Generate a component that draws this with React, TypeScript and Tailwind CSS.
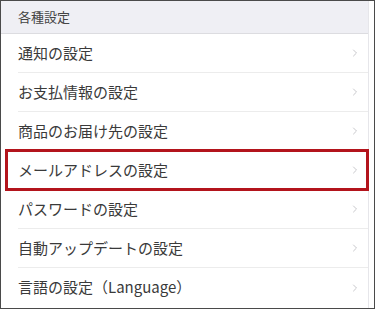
import { ChevronRight } from "lucide-react";

const items = [
  "通知の設定",
  "お支払情報の設定",
  "商品のお届け先の設定",
  "メールアドレスの設定",
  "パスワードの設定",
  "自動アップデートの設定",
  "言語の設定（Language）",
];

const App = () => {
  return (
    <div
      className="w-[375px] h-[309px] border border-[#4a4a4a] bg-white overflow-hidden"
      style={{ fontFamily: '"Noto Sans CJK JP", "Noto Sans", sans-serif' }}
    >
      <div className="w-[368px] h-full border-r border-[#e6e6ea] flex flex-col">
        <div className="h-[33px] bg-[#efeff4] border-b border-[#dcdce0] flex items-center pl-[17px] text-[13px] text-[#444]">
          各種設定
        </div>
        {items.map((label, i) => (
          <div key={label} className="relative h-[39px] pl-[17px]">
            <div
              className={
                "h-full flex items-center pr-[7px] " +
                (i < items.length - 1 ? "border-b border-[#ececec]" : "")
              }
            >
              <span className="flex-1 text-[15px] text-[#3a3a3a]">{label}</span>
              <ChevronRight className="w-[12px] h-[12px] text-[#c8c8cc]" strokeWidth={2} />
            </div>
            {i === 3 && (
              <div className="absolute left-[4px] -right-[1px] top-[-2px] bottom-[-1px] border-[3px] border-[#b3141c]" />
            )}
          </div>
        ))}
      </div>
    </div>
  );
};

export default App;
